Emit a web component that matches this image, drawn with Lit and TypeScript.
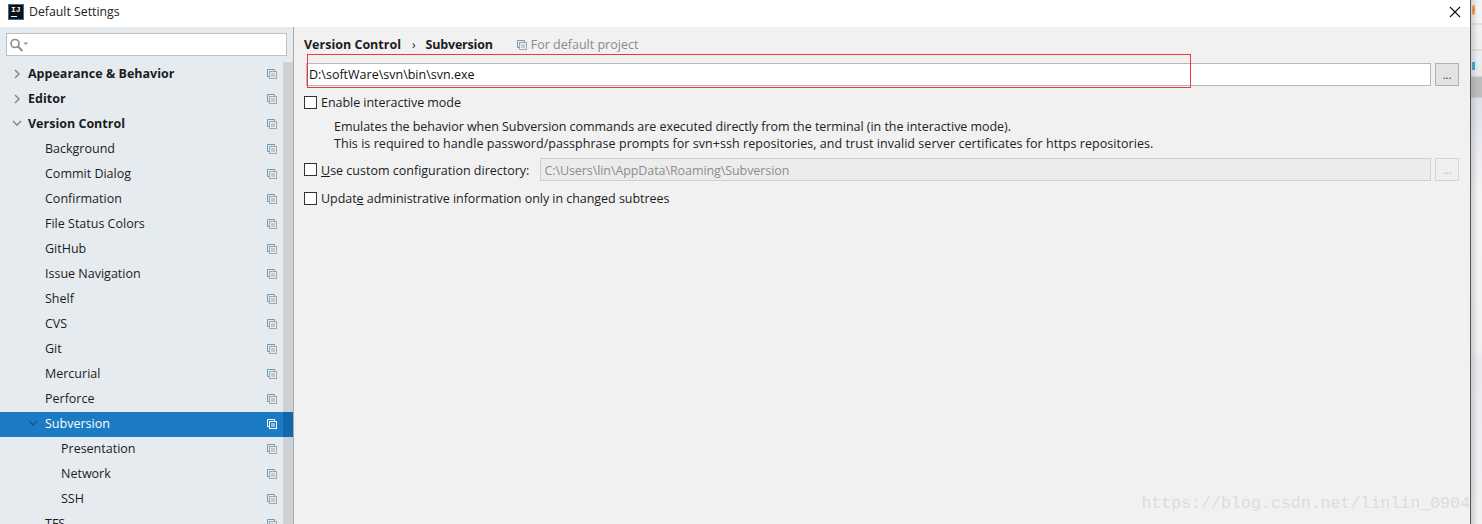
import { LitElement, html, css } from "lit";
import { customElement } from "lit/decorators.js";

const copyIcon = (selected = false) => html`<svg class="copy" width="10" height="10" viewBox="0 0 10 10">
  <path d="M2.5 7.5H0.5V0.5H7.5V2.5" fill="none" stroke=${selected ? "#fff" : "#5f9fc6"} stroke-width="1"/>
  <rect x="2.5" y="2.5" width="7" height="7" fill="none" stroke=${selected ? "#fff" : "#a6a6a6"} stroke-width="1"/>
  <path d="M4 5H8M4 7H8" stroke=${selected ? "#fff" : "#a6a6a6"} stroke-width="1"/>
</svg>`;

const arrow = (open: boolean, level: number, color = "#8c8c8c") =>
  html`<svg class="arrow ${open ? "open" : "closed"} a${level}" width="10" height="10" viewBox="0 0 10 10">
    <path d=${open ? "M1 3L5 7L9 3" : "M3 1L7 5L3 9"} fill="none" stroke=${color} stroke-width="1.6"/>
  </svg>`;

interface Row { label: string; level: number; bold?: boolean; arrow?: "open" | "closed"; selected?: boolean; }

const rows: Row[] = [
  { label: "Appearance & Behavior", level: 0, bold: true, arrow: "closed" },
  { label: "Editor", level: 0, bold: true, arrow: "closed" },
  { label: "Version Control", level: 0, bold: true, arrow: "open" },
  { label: "Background", level: 1 },
  { label: "Commit Dialog", level: 1 },
  { label: "Confirmation", level: 1 },
  { label: "File Status Colors", level: 1 },
  { label: "GitHub", level: 1 },
  { label: "Issue Navigation", level: 1 },
  { label: "Shelf", level: 1 },
  { label: "CVS", level: 1 },
  { label: "Git", level: 1 },
  { label: "Mercurial", level: 1 },
  { label: "Perforce", level: 1 },
  { label: "Subversion", level: 1, arrow: "open", selected: true },
  { label: "Presentation", level: 2 },
  { label: "Network", level: 2 },
  { label: "SSH", level: 2 },
  { label: "TFS", level: 1 },
];

@customElement("app-root")
export class AppRoot extends LitElement {
  static styles = css`
    :host { display: block; width: 1482px; height: 524px; overflow: hidden; position: relative;
      font-family: "Open Sans", "Noto Sans", sans-serif; font-size: 12.5px; color: #1c1c1c; background: #f1f1f1; }
    .window { display: flex; flex-direction: column; width: 1470px; height: 524px; }
    .titlebar { height: 27px; box-sizing: border-box; flex: none; background: #fff; display: flex; align-items: center; padding: 0 9px 4px 8px; gap: 5px; font-size: 12.3px; color: #222; }
    .logo { width: 16px; height: 16px; background: #111; color: #fff; font: bold 8px/10px "Liberation Mono", monospace; padding-left: 2px; box-sizing: border-box; border: 1px solid #2a6fa8; position: relative; }
    .logo::after { content: ""; position: absolute; left: 2px; bottom: 2px; width: 6px; height: 1px; background: #fff; }
    .titletext { flex: 1; }
    .body { flex: 1; display: flex; min-height: 0; }
    .side { width: 293px; flex: none; background: #e6ebf0; border-right: 1px solid #aaa; display: flex; flex-direction: column; overflow: hidden; }
    .searchwrap { height: 35px; flex: none; padding: 6px 6px 0 6px; box-sizing: border-box; }
    .search { height: 23px; width: 281px; box-sizing: border-box; background: #fff; border: 1px solid #c0c0c0; display: flex; align-items: center; padding-left: 3px; }
    .tree { position: relative; flex: 1; }
    .scroll { position: absolute; right: 0; top: 0; bottom: 0; width: 10px; background: #cdd1d4; }
    .row { height: 25px; box-sizing: border-box; padding-bottom: 2px; display: flex; align-items: center; position: relative; }
    .row.sel { background: #1b7bc4; color: #fff; }
    .row.sel::after { content: ""; position: absolute; right: 0; top: 0; bottom: 0; width: 10px; background: #0f68ad; }
    .row .arrow { position: absolute; }
    .arrow.closed { top: 7px; } .arrow.open { top: 6px; }
    .arrow.a0 { left: 12px; } .arrow.a1 { left: 28px; }
    .row .copy { position: absolute; left: 267px; top: 7px; z-index: 1; }
    .row.b { font-weight: 700; }
    .l0 { padding-left: 28px; } .l1 { padding-left: 45px; } .l2 { padding-left: 61px; }
    .main { flex: 1; padding: 9px 11px 0 10px; min-width: 0; display: flex; flex-direction: column; }
    .crumbs { display: flex; align-items: center; height: 17px; font-weight: 700; }
    .crumbs .sep { margin: 0 10px 0 11px; font-weight: 400; font-size: 12px; }
    .crumbs .cur { letter-spacing: -0.2px; }
    .proj { display: flex; align-items: center; gap: 4px; margin-left: 24px; font-weight: 400; color: #8a8a8a; }
    .pathrow { display: flex; gap: 4px; margin-top: 10px; padding-left: 2px; }
    .input { flex: 1; height: 23px; box-sizing: border-box; background: #fff; border: 1px solid #b9b9b9; display: flex; align-items: center; padding-left: 2px; color: #111; }
    .btn { width: 24px; height: 23px; box-sizing: border-box; flex: none; background: #e3e3e3; border: 1px solid #b2b2b2; display: flex; align-items: center; justify-content: center; font-size: 11px; line-height: 1; color: #222; }
    .check { display: flex; align-items: center; gap: 4px; height: 17px; letter-spacing: -0.04px; }
    .box { width: 13px; height: 13px; box-sizing: border-box; border: 1px solid #333; background: #fff; flex: none; }
    .c1 { margin-top: 8px; }
    .desc { margin: 7px 0 0 30px; line-height: 17px; color: #222; }
    .desc span { display: block; white-space: nowrap; }
    .tight { letter-spacing: -0.045px; } .loose { letter-spacing: 0.05px; }
    .c2row { display: flex; align-items: center; margin-top: 6px; height: 23px; }
    .c2row .check { margin-right: 11px; letter-spacing: 0; }
    .c2label { padding-top: 1px; }
    .input.dis { background: #ececec; border-color: #cfcfcf; color: #8c8c8c; padding: 1px 0 0 3px; letter-spacing: -0.08px; }
    .btn.dis { background: #f0f0f0; border-color: #d4d4d4; color: #b0b0b0; margin-left: 4px; }
    .c3 { margin-top: 9px; }
    u { text-underline-offset: 1px; }
    .redbox { position: absolute; left: 307px; top: 54px; width: 884px; height: 34px; box-sizing: border-box; border: 1px solid #f03a3a; pointer-events: none; }
    .close { flex: none; display: block; }
    .edge { position: absolute; left: 1470px; top: 0; bottom: 0; width: 12px; border-left: 1px solid #555; box-sizing: border-box;
      background: linear-gradient(90deg, rgba(120,120,130,.28) 0, rgba(120,120,130,0) 7px),
        linear-gradient(180deg, #f4f4f4 0, #f4f4f4 23px, #d0d0d0 24px, #f0f0f0 25px, #eee 49px, #d0d0d0 50px, #eef0f0 51px, #e8e8e8 76px, #bdbdbd 77px, #bdbdbd 97px, #dde0ea 98px, #e6e8f0 130px, #f4f4f4 200px, #f1f1f1 350px, #e8eaf0 358px, #f1f1f1 524px); }
    .spot { position: absolute; left: 1px; border-radius: 50%; }
    .spot.o { top: 5px; width: 3px; height: 10px; background: #e08a3c; }
    .spot.b { top: 62px; width: 3px; height: 8px; border-radius: 0; background: #4a9cc8; }
    .watermark { position: absolute; right: 12px; top: 492px; font: 16.6px/24px "Liberation Mono", monospace; color: #dcdcdc; white-space: nowrap; }
  `;

  private renderRow(r: Row) {
    return html`<div class="row l${r.level} ${r.bold ? "b" : ""} ${r.selected ? "sel" : ""}">
      ${r.arrow ? arrow(r.arrow === "open", r.level, r.selected ? "#155a92" : "#8c8c8c") : ""}
      ${r.label}${copyIcon(r.selected)}
    </div>`;
  }

  render() {
    return html`
      <div class="window">
        <div class="titlebar">
          <div class="logo">IJ</div>
          <div class="titletext">Default Settings</div>
          <svg class="close" width="12" height="12" viewBox="0 0 12 12"><path d="M1 1L11 11M11 1L1 11" stroke="#111" stroke-width="1.1"/></svg>
        </div>
        <div class="body">
          <div class="side">
            <div class="searchwrap">
              <div class="search">
                <svg width="18" height="14" viewBox="0 0 18 14">
                  <circle cx="5" cy="5.5" r="4" fill="none" stroke="#8a8a8a" stroke-width="1.6"/>
                  <path d="M8 8.5L12.5 13" stroke="#8a8a8a" stroke-width="2"/>
                  <path d="M13.5 4.5H18L15.75 7Z" fill="#8a8a8a"/>
                </svg>
              </div>
            </div>
            <div class="tree">
              <div class="scroll"></div>
              ${rows.map((r) => this.renderRow(r))}
            </div>
          </div>
          <div class="main">
            <div class="crumbs">Version Control<span class="sep">›</span><span class="cur">Subversion</span>
              <span class="proj">${copyIcon()}For default project</span>
            </div>
            <div class="pathrow"><div class="input">D:\\softWare\\svn\\bin\\svn.exe</div><div class="btn">...</div></div>
            <div class="check c1"><span class="box"></span>Enable interactive mode</div>
            <div class="desc"><span class="tight">Emulates the behavior when Subversion commands are executed directly from the terminal (in the interactive mode).</span><span class="loose">This is required to handle password/passphrase prompts for svn+ssh repositories, and trust invalid server certificates for https repositories.</span></div>
            <div class="c2row">
              <div class="check"><span class="box"></span><span class="c2label"><u>U</u>se custom configuration directory:</span></div>
              <div class="input dis">C:\\Users\\lin\\AppData\\Roaming\\Subversion</div><div class="btn dis">...</div>
            </div>
            <div class="check c3"><span class="box"></span><span>Updat<u>e</u> administrative information only in changed subtrees</span></div>
          </div>
        </div>
      </div>
      <div class="edge"><div class="spot o"></div><div class="spot b"></div></div>
      <div class="redbox"></div>
      <div class="watermark">https://blog.csdn.net/linlin_0904</div>
    `;
  }
}
